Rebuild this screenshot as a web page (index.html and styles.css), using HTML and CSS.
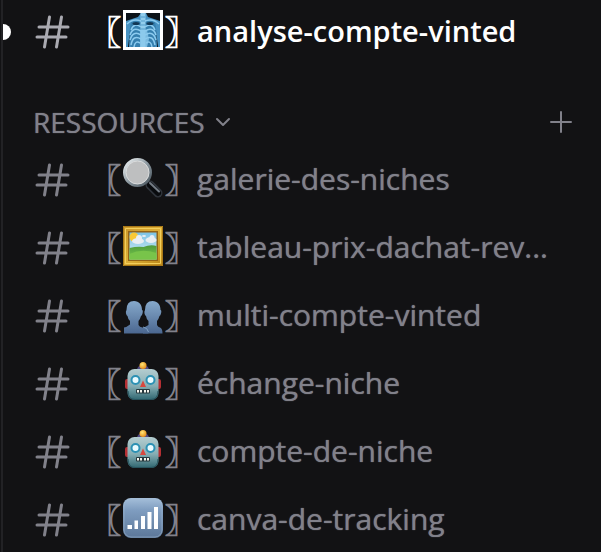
FILE: index.html
```
<!DOCTYPE html>
<html lang="fr">
<head>
<meta charset="utf-8">
<meta name="viewport" content="width=device-width, initial-scale=1">
<title>Salons</title>
<link rel="stylesheet" href="styles.css">
</head>
<body>
<svg class="defs" width="0" height="0" aria-hidden="true">
  <defs>
    <linearGradient id="steel" x1="0" y1="0" x2="0" y2="1"><stop offset="0" stop-color="#86a9cb"/><stop offset="1" stop-color="#4b6790"/></linearGradient>
    <linearGradient id="signal" x1="0" y1="0" x2="0" y2="1"><stop offset="0" stop-color="#a5bfda"/><stop offset=".3" stop-color="#7f9dc0"/><stop offset="1" stop-color="#5c7799"/></linearGradient>
    <linearGradient id="face" x1="0" y1="0" x2="0" y2="1"><stop offset="0" stop-color="#b4cdd0"/><stop offset=".55" stop-color="#86aeb4"/><stop offset="1" stop-color="#2f6670"/></linearGradient>
    <linearGradient id="gold" x1="0" y1="0" x2="1" y2="1"><stop offset="0" stop-color="#c9952a"/><stop offset=".5" stop-color="#dcae38"/><stop offset="1" stop-color="#b98518"/></linearGradient>
    <linearGradient id="sky" x1="0" y1="0" x2="0" y2="1"><stop offset="0" stop-color="#7cc3e6"/><stop offset="1" stop-color="#d6eef3"/></linearGradient>
    <linearGradient id="grass" x1="0" y1="0" x2="0" y2="1"><stop offset="0" stop-color="#4d9a3c"/><stop offset="1" stop-color="#7ccb4c"/></linearGradient>
    <linearGradient id="rim" x1="0" y1="0" x2="1" y2="1"><stop offset="0" stop-color="#f3f6f7"/><stop offset=".5" stop-color="#8e9aa2"/><stop offset="1" stop-color="#46525b"/></linearGradient>
    <radialGradient id="bulb" cx=".4" cy=".35" r=".7"><stop offset="0" stop-color="#ffe577"/><stop offset="1" stop-color="#e58a13"/></radialGradient>
    <symbol id="hash" viewBox="0 0 36 36">
      <path d="M14.500 3 9.500 33M26.500 3 21.500 33M4 13H33M2 23H31" fill="none" stroke="currentColor" stroke-width="3" stroke-linecap="round"/>
    </symbol>
    <symbol id="robot" viewBox="0 0 40 40">
      <path d="M14 8a6 5 0 0 1 12 0z" fill="#514a83"/>
      <circle cx="20" cy="3.500" r="3.500" fill="url(#bulb)"/>
      <rect x="2" y="17" width="5" height="10" rx="2" fill="#b52f33"/>
      <rect x="33" y="17" width="5" height="10" rx="2" fill="#b52f33"/>
      <rect x="4.500" y="7" width="31" height="31" rx="7" fill="url(#face)"/>
      <path d="M5 29q0 8.500 7 8.500h16q7 0 7-8.500" fill="none" stroke="#28535d"/>
      <g fill="#e9fbff" stroke="#2c91b4" stroke-width="2"><circle cx="12.500" cy="18" r="4"/><circle cx="27.500" cy="18" r="4"/></g>
      <path d="M20 18.500 23 25h-6z" fill="#d8483f"/>
      <rect x="13" y="27" width="14" height="4.500" rx="1" fill="#26383d"/>
      <path d="M14 28h2v2.500h-2zM17 28h2v2.500h-2zM21 28h2v2.500h-2zM24 28h2v2.500h-2z" fill="#f5f5ee"/>
    </symbol>
  </defs>
</svg>
<nav class="sidebar" aria-label="Salons">
  <a class="channel unread" href="#analyse">
    <svg class="hash" aria-hidden="true"><use href="#hash"/></svg>
    <span class="tag"><span class="bracket">〖</span>
      <svg class="emoji" viewBox="0 0 40 40" role="img" aria-label="radiographie">
        <path fill="#fff" d="M0 0h40v40H0z"/>
        <path fill="#0c1319" d="M3 3h34v34H3z"/>
        <path d="M3 11q6-2 12-4L18 3h5l2 4q6 2 12 4v26h-2L33 20l1 17H6L7 20 5 37H3z" fill="#4792c2"/>
        <path d="M8 12q7-3 10 0v25H8q-3-12 0-25zM32 12q-7-3-10 0v25h10q3-12 0-25z" fill="#357fae"/>
        <g fill="none" stroke="#8ccbef" stroke-width="1.500"><path d="M18 11Q10 8 4 14M22 11q8-3 14 3M18 17Q11 12 8 20M22 17q7-5 10 3M18 21Q10 16 7 25M22 21q8-5 11 4M18 25Q10 20 7 30M22 25q8-5 11 5M18 29Q10 24 8 35M22 29q8-5 10 6M17 33Q12 30 11 37M23 33q5-3 6 4"/></g>
        <g fill="#123754"><ellipse cx="13" cy="13.500" rx="3.500" ry="1.500"/><ellipse cx="27" cy="13.500" rx="3.500" ry="1.500"/></g>
        <path d="M17.500 3h5v34h-5z" fill="#92cdec"/><path d="M17 20h7l2 9-2 8h-7z" fill="#8bc9ec" opacity=".8"/>
        <path d="M18 7h4M18 11h4M18 15h4M18 19h4" stroke="#539dcb"/>
      </svg><span class="bracket">〗</span></span>
    <span class="name">analyse-compte-vinted</span>
  </a>
  <header class="category">
    <button class="toggle" type="button" aria-expanded="true">RESSOURCES
      <svg class="chevron" viewBox="0 0 16 16" aria-hidden="true"><path d="m2 5 6 6 6-6"/></svg>
    </button>
    <button class="add" type="button" aria-label="Créer un salon">
      <svg class="plus" viewBox="0 0 24 24" aria-hidden="true"><path d="M12 2v20M2 12h20"/></svg>
    </button>
  </header>
  <a class="channel" href="#galerie">
    <svg class="hash" aria-hidden="true"><use href="#hash"/></svg>
    <span class="tag"><span class="bracket">〖</span>
      <svg class="emoji" viewBox="0 0 40 40" role="img" aria-label="loupe">
        <path d="m24 24 4 4" stroke="#8c959a" stroke-width="3"/>
        <path d="m27 27 8 8" stroke="#30353c" stroke-width="9" stroke-linecap="round"/>
        <path d="m27 27 8 8" stroke="#090b0e" stroke-width="6" stroke-linecap="round"/>
        <path d="m27 25 9 8.500" stroke="#747c85" stroke-width="2" stroke-linecap="round"/>
        <circle cx="14.500" cy="14.500" r="13" fill="#bebfc0" stroke="url(#rim)" stroke-width="3"/>
        <circle cx="14.500" cy="14.500" r="11.500" fill="none" stroke="#dadcdd"/>
      </svg><span class="bracket">〗</span></span>
    <span class="name">galerie-des-niches</span>
  </a>
  <a class="channel" href="#tableau">
    <svg class="hash" aria-hidden="true"><use href="#hash"/></svg>
    <span class="tag"><span class="bracket">〖</span>
      <svg class="emoji" viewBox="0 0 40 40" role="img" aria-label="tableau">
        <path fill="url(#gold)" d="M0 0h40v40H0z"/>
        <path d="M.500 .500h39v39H.500z" fill="none" stroke="#a87817"/>
        <path d="M2.500 2.500h35v35h-35z" fill="none" stroke="#f3cf5b"/>
        <path d="M5 5h30v30H5z" fill="#936316"/>
        <path d="M6.500 6.500h27v27h-27z" fill="url(#sky)"/>
        <circle cx="11" cy="11" r="4.500" fill="#f9c935"/>
        <g fill="#e9eef3"><ellipse cx="15" cy="15" rx="6" ry="3"/><circle cx="16" cy="12" r="3"/><ellipse cx="28" cy="14" rx="5.500" ry="3"/><circle cx="29" cy="11.500" r="2.500"/><ellipse cx="21" cy="10" rx="2" ry="1"/></g>
        <path d="M6.500 22q8-2 14-1 7-3 13-1v13.500h-27z" fill="url(#grass)"/>
        <path d="M6.500 28q12-6 27-1v6.500h-27z" fill="#78c44a"/>
      </svg><span class="bracket">〗</span></span>
    <span class="name">tableau-prix-dachat-rev...</span>
  </a>
  <a class="channel" href="#multi">
    <svg class="hash" aria-hidden="true"><use href="#hash"/></svg>
    <span class="tag"><span class="bracket">〖</span>
      <svg class="emoji" viewBox="0 0 40 40" role="img" aria-label="silhouettes">
        <path d="M29.500 7c5 0 8 3.500 8 9 1 0 1 2 .500 3.500q-.5 2-1.500 2.500-1 3.500-2.500 5v4q1 2 3 2.500 2.500 1 2.500 6H20v-5.500q3-1.500 5.500-3v-4q-2-1.500-2.500-5-1-.5-1.500-2.500t.5-3.500q0-9 7.500-9z" fill="url(#steel)"/>
        <path d="M11 7c5 0 8 3.500 8 9 1 0 1 2 .500 3.500q-.5 2-1.500 2.500-1 3.500-2.500 5v4q1 2 4 2.500 6 1 6 6H1v-6q3-.5 6-3v-3.500q-2-1.500-2.500-5-1-.5-1.500-2.500t.5-3.500q0-9 7.500-9z" fill="url(#steel)"/>
        <path d="M20 33q4.500 .5 5.500 5" fill="none" stroke="#7d9fc2"/>
      </svg><span class="bracket">〗</span></span>
    <span class="name">multi-compte-vinted</span>
  </a>
  <a class="channel" href="#echange">
    <svg class="hash" aria-hidden="true"><use href="#hash"/></svg>
    <span class="tag"><span class="bracket">〖</span>
      <svg class="emoji" role="img" aria-label="robot"><use href="#robot"/></svg><span class="bracket">〗</span></span>
    <span class="name">échange-niche</span>
  </a>
  <a class="channel" href="#compte">
    <svg class="hash" aria-hidden="true"><use href="#hash"/></svg>
    <span class="tag"><span class="bracket">〖</span>
      <svg class="emoji" role="img" aria-label="robot"><use href="#robot"/></svg><span class="bracket">〗</span></span>
    <span class="name">compte-de-niche</span>
  </a>
  <a class="channel" href="#canva">
    <svg class="hash" aria-hidden="true"><use href="#hash"/></svg>
    <span class="tag"><span class="bracket">〖</span>
      <svg class="emoji" viewBox="0 0 40 40" role="img" aria-label="signal">
        <rect width="40" height="40" rx="8" fill="url(#signal)"/>
        <rect x="1" y="1" width="38" height="38" rx="7" fill="none" stroke="#a3bbd3" opacity=".5"/>
        <path d="M4.500 27H9v4H4.500zM11.500 22.500H15V31h-3.500zM18 18h4v13h-4zM24.500 14h4v17h-4zM31 9h4v22h-4z" fill="#fff"/>
      </svg><span class="bracket">〗</span></span>
    <span class="name">canva-de-tracking</span>
  </a>
</nav>
</body>
</html>
```
FILE: styles.css
```
* {
  box-sizing: border-box;
}

body {
  margin: 0;
  background: #121214;
  color: #81818a;
  font-family: "Open Sans", "Noto Sans", "Noto Sans CJK JP", sans-serif;
  overflow: hidden;
}

.defs {
  position: absolute;
}

.sidebar {
  margin-left: 1px;
  border-left: 2px solid #222225;
  min-height: 100vh;
}

.channel {
  position: relative;
  display: flex;
  align-items: center;
  height: 68px;
  padding: 0 32px;
  color: inherit;
  text-decoration: none;
}

.unread {
  height: 64px;
  color: #fff;
}

.unread::before {
  content: "";
  position: absolute;
  left: 0;
  width: 8px;
  height: 16px;
  border-radius: 0 8px 8px 0;
  background: #fff;
}

.hash {
  flex: none;
  width: 36px;
  height: 36px;
}

.unread .hash {
  color: #aaaab1;
}

.tag {
  flex: none;
  display: flex;
  align-items: center;
  gap: 2px;
  margin: 0 16px 4px 34px;
}

.bracket {
  width: 16px;
  font-family: "Noto Sans CJK JP", sans-serif;
  font-size: 32px;
  font-weight: 700;
  line-height: 40px;
  font-feature-settings: "halt" 1;
  -webkit-text-stroke: 1px currentColor;
}

.emoji {
  width: 40px;
  height: 40px;
}

.name {
  min-width: 0;
  padding-bottom: 2px;
  overflow: hidden;
  text-overflow: ellipsis;
  white-space: nowrap;
  font-size: 30px;
  line-height: 44px;
  text-shadow: 0 0 1px currentColor;
}

.unread .name {
  font-size: 29px;
  font-weight: 600;
  text-shadow: none;
}

.category {
  display: flex;
  align-items: center;
  justify-content: space-between;
  height: 48px;
  margin-top: 34px;
  padding: 0 28px 0 30px;
}

.toggle,
.add {
  display: flex;
  align-items: center;
  gap: 10px;
  padding: 0;
  border: 0;
  background: none;
  color: inherit;
  font: inherit;
  font-size: 28px;
  line-height: 40px;
  text-shadow: 0 0 1px currentColor;
}

.chevron {
  width: 16px;
  height: 16px;
}

.plus {
  width: 24px;
  height: 24px;
}

.chevron path,
.plus path {
  fill: none;
  stroke: currentColor;
  stroke-width: 2;
  stroke-linecap: round;
  stroke-linejoin: round;
}
```
